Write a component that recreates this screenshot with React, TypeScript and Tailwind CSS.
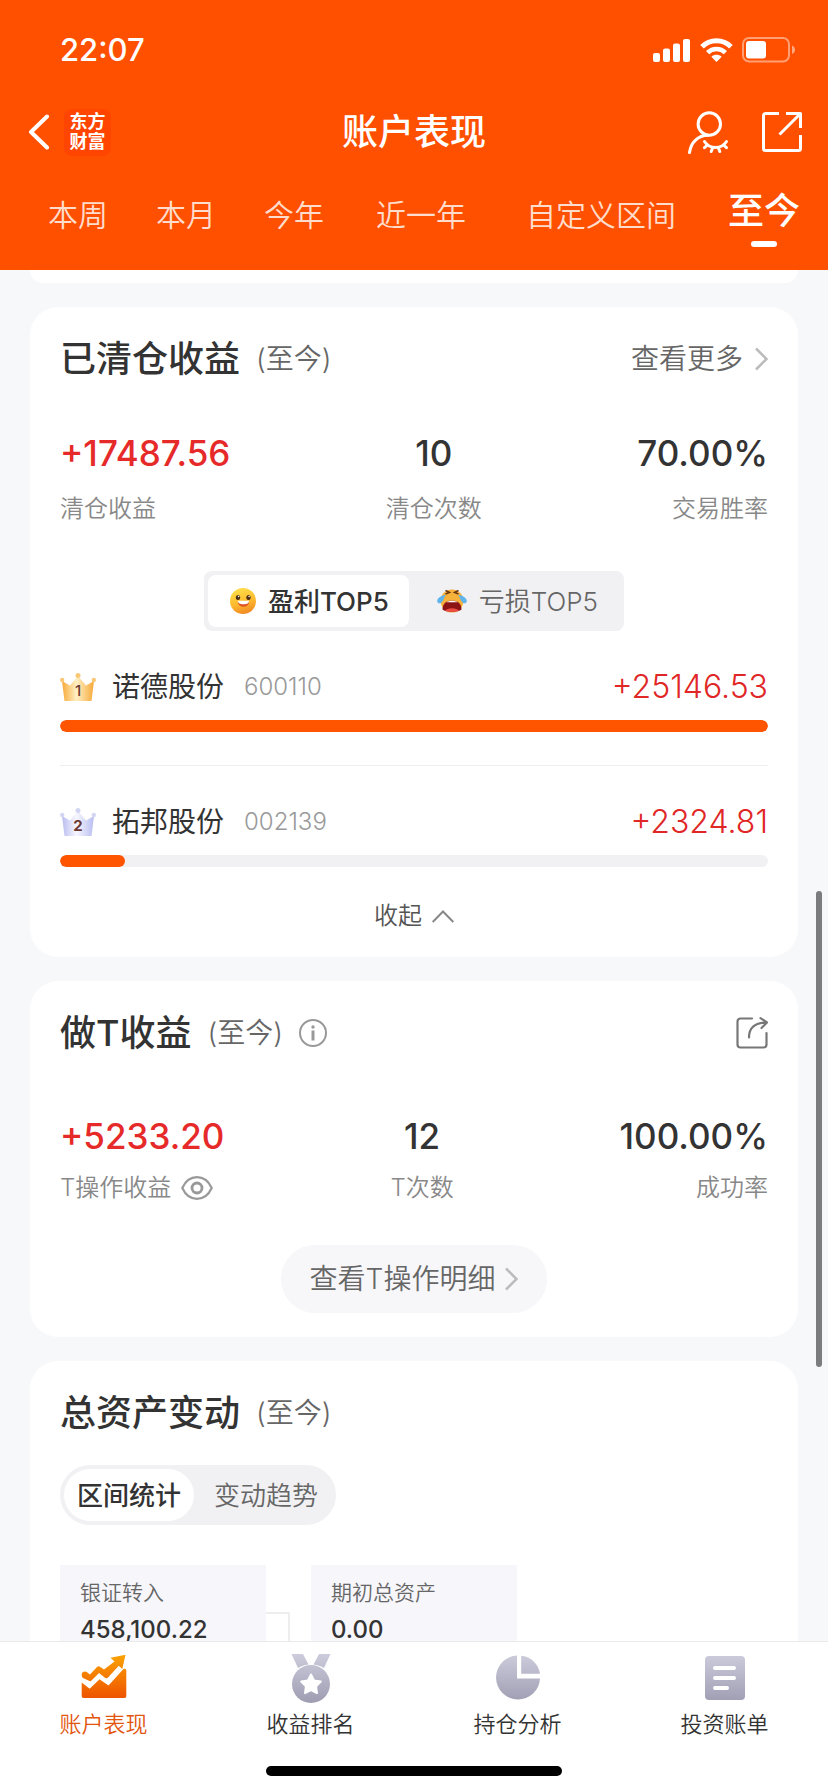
import { useState } from "react";
import type { ReactNode } from "react";
import clsx from "clsx";

const PERIODS = [
  { name: "本周", pad: "px-6" },
  { name: "本月", pad: "px-6" },
  { name: "今年", pad: "px-6" },
  { name: "近一年", pad: "px-7" },
  { name: "自定义区间", pad: "pl-8 pr-7" },
  { name: "至今", pad: "px-6" },
];

const TOP_PROFIT = [
  { rank: 1, name: "诺德股份", code: "600110", value: 25146.53 },
  { rank: 2, name: "拓邦股份", code: "002139", value: 2324.81 },
];

const StatusBar = () => (
  <div className="flex h-[98px] items-center justify-between pt-[2px] pr-8 pl-[60px]">
    <span className="text-[31px] leading-10 font-medium">22:07</span>
    <div className="flex items-center gap-[9px]">
      <svg width="38" height="24" viewBox="0 0 38 24" fill="currentColor">
        <rect x="0" y="15" width="7" height="9" rx="2" />
        <rect x="10" y="10.5" width="7" height="13.5" rx="2" />
        <rect x="20" y="5.5" width="7" height="18.5" rx="2" />
        <rect x="30" y="1" width="7" height="23" rx="2" />
      </svg>
      <svg width="33" height="24" viewBox="0 0 33 24" fill="none" stroke="currentColor">
        <path d="M2 8.8C10 .8 23 .8 31 8.8" strokeWidth="5" />
        <path d="M7.6 14.6c5-4.8 12.8-4.8 17.8 0" strokeWidth="4.6" />
        <path d="M16.5 24l-5.2-5.2c3-2.6 7.4-2.6 10.4 0z" fill="currentColor" stroke="none" />
      </svg>
      <svg width="54" height="26" viewBox="0 0 54 26">
        <rect x="1" y="1" width="46" height="23.5" rx="6" fill="none" stroke="#fff" strokeOpacity=".45" strokeWidth="2" />
        <rect x="4" y="4" width="20" height="17.5" rx="3" fill="#fff" />
        <path d="M50 8.5c4 1.5 4 7 0 8.5z" fill="#fff" fillOpacity=".5" />
      </svg>
    </div>
  </div>
);

const Header = () => {
  const [period, setPeriod] = useState("至今");
  return (
    <header className="h-[270px] shrink-0 bg-[#ff5000] text-white">
      <StatusBar />
      <div className="grid h-[68px] grid-cols-[1fr_auto_1fr] items-center px-[26px]">
        <div className="flex items-center gap-[14px]">
          <button aria-label="返回">
            <svg width="24" height="36" viewBox="-2 0 24 36" fill="none" stroke="currentColor" strokeWidth="4" strokeLinecap="round" strokeLinejoin="round">
              <path d="M19 2.5L3 18l16 15.5" />
            </svg>
          </button>
          <div className="flex size-[47px] items-center justify-center rounded-lg bg-[#ff4500] text-center text-[18px] leading-5 font-bold">
            东方
            <br />
            财富
          </div>
        </div>
        <h1 className="text-[36px] leading-10 font-medium">账户表现</h1>
        <div className="flex items-center justify-end gap-8">
          <button aria-label="隐藏账户">
            <svg width="43" height="43" viewBox="0 0 43 43" fill="none" stroke="currentColor" strokeWidth="3" strokeLinecap="round">
              <circle cx="22.3" cy="13" r="11.2" />
              <path d="M2.5 41.5C4 31 11 24.5 21 24.3" />
              <path d="M17.5 30.5c5 8 17 8 22 0" />
              <path d="M20.5 34l-3 2.7M25.7 36.8l-1.5 3.7M31.3 36.8l1.5 3.7M36.5 34l3 2.7" />
            </svg>
          </button>
          <button aria-label="分享">
            <svg width="40" height="40" viewBox="0 0 40 40" fill="none" stroke="currentColor" strokeWidth="3" strokeLinejoin="round">
              <path d="M17 1.5H3.5a2 2 0 0 0-2 2v33a2 2 0 0 0 2 2h33a2 2 0 0 0 2-2V23" />
              <path d="M24 1.5h14.5V16M38 2L17.5 22.5" />
            </svg>
          </button>
        </div>
      </div>
      <nav className="flex h-[98px] items-center overflow-hidden pl-6">
        {PERIODS.map((p) => {
          const active = p.name === period;
          return (
            <button
              key={p.name}
              onClick={() => setPeriod(p.name)}
              className={clsx("relative shrink-0 whitespace-nowrap", p.pad)}
            >
              <span
                className={clsx(
                  "block leading-10",
                  active ? "pb-2 text-[36px] font-medium" : "text-[30px] font-[350] text-[#ffdccc]"
                )}
              >
                {p.name}
              </span>
              {active && <span className="absolute -bottom-2 left-1/2 h-[6px] w-[26px] -translate-x-1/2 rounded-full bg-white" />}
            </button>
          );
        })}
      </nav>
    </header>
  );
};

const Chevron = ({ className }: { className?: string }) => (
  <svg className={className} width="13" height="24" viewBox="0 0 13 24" fill="none" stroke="currentColor" strokeWidth="2.5">
    <path d="M1 1.5L11.5 12 1 22.5" />
  </svg>
);

const Card = ({ children }: { children: ReactNode }) => (
  <section className="rounded-[28px] bg-white px-[30px] pt-8">{children}</section>
);

const CardTitle = ({ title, icon, action }: { title: string; icon?: ReactNode; action?: ReactNode }) => (
  <div className="flex h-10 items-center">
    <h2 className="text-[36px] leading-10 font-medium">{title}</h2>
    <span className="ml-4 text-[28px] leading-10 font-[350] text-[#666]">(至今)</span>
    {icon}
    <div className="ml-auto flex items-center">{action}</div>
  </div>
);

interface StatProps {
  value: string;
  label: string;
  align: string;
  red?: boolean;
  icon?: ReactNode;
}

const Stat = ({ value, label, align, red, icon }: StatProps) => (
  <div className={clsx("flex flex-col", align)}>
    <span className={clsx("text-[35px] leading-10 font-medium", red && "text-[#e62a2a]")}>{value}</span>
    <span className="flex items-center gap-[10px] text-[24px] leading-10 font-[350] text-[#888]">
      {label}
      {icon}
    </span>
  </div>
);

const HappyFace = () => (
  <svg width="26" height="26" viewBox="0 0 26 26">
    <defs>
      <linearGradient id="happy" x1="0.2" y1="0" x2="0.5" y2="1">
        <stop offset="0" stopColor="#ffe14d" />
        <stop offset="0.6" stopColor="#fdb92e" />
        <stop offset="1" stopColor="#f08a24" />
      </linearGradient>
    </defs>
    <circle cx="13" cy="13" r="13" fill="url(#happy)" />
    <ellipse cx="8" cy="9.5" rx="2.2" ry="2.5" fill="#4a2a10" />
    <ellipse cx="18.5" cy="9.5" rx="2.2" ry="2.5" fill="#4a2a10" />
    <circle cx="8.6" cy="8.5" r=".8" fill="#fff" />
    <circle cx="19.1" cy="8.5" r=".8" fill="#fff" />
    <path d="M8 13.3h11c0 4.2-2.5 5.500-5.500 5.500S8 17.500 8 13.300z" fill="#e2562b" />
    <path d="M7.800 12.800h11.400c-.3 2.400-2 3.500-5.700 3.500s-5.400-1.100-5.700-3.500z" fill="#fff" />
  </svg>
);

const CryingFace = () => (
  <svg width="30" height="26" viewBox="0 0 30 26">
    <circle cx="15" cy="13" r="11.5" fill="#f7b23c" />
    <path d="M8.500 2.500l4 2-4 1.500M21.500 2.500l-4 2 4 1.500" fill="none" stroke="#6b3a14" strokeWidth="1.500" />
    <path d="M8.500 7c-3 0-8 2.500-8.300 5.500C0 16 4 16.500 6 12.500zM21.500 7c3 0 8 2.500 8.300 5.500.2 3.500-3.800 4-5.800 0z" fill="#5fb4ec" />
    <path d="M5.500 21.500c0-6 4-9 9.500-9s9.500 3 9.500 9c-3 3-16 3-19 0z" fill="#8c1414" />
    <path d="M9.500 14.300c2.500-2 8.500-2 11 0z" fill="#fff" />
    <path d="M8 22.800c2-3.500 12-3.500 14 0-3 1.300-11 1.300-14 0z" fill="#ee4d43" />
  </svg>
);

const Crown = ({ rank }: { rank: number }) => {
  const gold = rank === 1;
  const id = `crown-${rank}`;
  const edge = gold ? "#f7a93a" : "#b9bdf0";
  const ball = gold ? "#f9c877" : "#d3d6f2";
  return (
    <svg width="36" height="28" viewBox="0 0 36 28">
      <defs>
        <linearGradient id={id}>
          <stop offset="0" stopColor={edge} />
          <stop offset="0.45" stopColor={gold ? "#fff0c4" : "#f6f7ff"} />
          <stop offset="1" stopColor={edge} />
        </linearGradient>
      </defs>
      <path d="M2 8l8 4.500L18 3l8 9.500L34 8l-2.500 20h-27z" fill={`url(#${id})`} />
      <circle cx="2.200" cy="7" r="2.200" fill={ball} />
      <circle cx="18" cy="2.500" r="2.500" fill={ball} />
      <circle cx="33.800" cy="7" r="2.200" fill={ball} />
      <text x="18" y="23" textAnchor="middle" fontSize="15" fontWeight={gold ? 500 : 700} fill="#6b3a35">
        {rank}
      </text>
    </svg>
  );
};

const ClearedCard = () => {
  const [tab, setTab] = useState("profit");
  const max = TOP_PROFIT[0].value;
  return (
    <Card>
      <CardTitle
        title="已清仓收益"
        action={
          <a href="#more" className="flex items-center gap-3 text-[28px] leading-10 font-[350] text-[#666]">
            查看更多
            <Chevron className="text-[#bbb]" />
          </a>
        }
      />
      <div className="mt-[54px] flex justify-between *:gap-4">
        <Stat value="+17487.56" label="清仓收益" align="items-start" red />
        <Stat value="10" label="清仓次数" align="items-center" />
        <Stat value="70.00%" label="交易胜率" align="items-end" />
      </div>
      <div className="mx-auto mt-[42px] flex h-[60px] w-fit rounded-lg bg-[#f1f1f3] p-1 text-[26px]">
        <button
          onClick={() => setTab("profit")}
          className={clsx("flex items-center gap-3 rounded-lg pr-5 pl-[22px]", tab === "profit" ? "bg-white font-medium" : "font-[350] text-[#666]")}
        >
          <HappyFace />
          盈利TOP5
        </button>
        <button
          onClick={() => setTab("loss")}
          className={clsx("flex items-center gap-3 rounded-lg pr-[22px] pl-7", tab === "loss" ? "bg-white font-medium" : "font-[350] text-[#666]")}
        >
          <CryingFace />
          亏损TOP5
        </button>
      </div>
      <ul className="mt-9 divide-y divide-[#eee]">
        {TOP_PROFIT.map((s) => (
          <li key={s.code} className="pb-[33px] not-first:pt-9">
            <div className="flex h-10 items-center">
              <Crown rank={s.rank} />
              <span className="ml-4 text-[28px] leading-10">{s.name}</span>
              <span className="ml-5 text-[24px] leading-10 font-[350] text-[#999]">{s.code}</span>
              <span className="ml-auto text-[32px] leading-10 font-[350] text-[#e02626]">+{s.value.toFixed(2)}</span>
            </div>
            <div className="mt-[13px] h-3 overflow-hidden rounded-full bg-[#f1f1f3]">
              <div className="h-full rounded-full bg-[#ff5500]" style={{ width: `${(s.value / max) * 100}%` }} />
            </div>
          </li>
        ))}
      </ul>
      <button className="mx-auto -mt-1 flex items-center gap-[10px] pb-[21px] text-[24px] leading-10 font-[350] text-[#555]">
        收起
        <svg width="22" height="13" viewBox="0 0 22 13" fill="none" stroke="#888" strokeWidth="2">
          <path d="M.7 12L11 1.500 21.300 12" />
        </svg>
      </button>
    </Card>
  );
};

const TradeCard = () => (
  <Card>
    <CardTitle
      title="做T收益"
      icon={
        <svg className="ml-4" width="28" height="28" viewBox="0 0 28 28" fill="none" stroke="#999" strokeWidth="2">
          <circle cx="14" cy="14" r="13" />
          <path d="M14 11.500v10" strokeWidth="3" />
          <circle cx="14" cy="8" r="1.700" fill="#999" stroke="none" />
        </svg>
      }
      action={
        <button aria-label="分享做T收益">
          <svg width="32" height="32" viewBox="0 0 32 32" fill="none" stroke="#777" strokeWidth="2.200" strokeLinecap="round" strokeLinejoin="round">
            <path d="M16 1.500H4.500a3 3 0 0 0-3 3v23a3 3 0 0 0 3 3h23a3 3 0 0 0 3-3V16" />
            <path d="M13 20.500C13 11 19 5.500 30.500 5.500M24.500 1.200l6.500 4.300-5.500 5.500" />
          </svg>
        </button>
      }
    />
    <div className="mt-[63px] flex justify-between *:gap-3">
      <Stat
        value="+5233.20"
        label="T操作收益"
        align="items-start"
        red
        icon={
          <svg width="32" height="24" viewBox="0 0 32 24" fill="none" stroke="#999" strokeWidth="2.200">
            <path d="M1.300 12C4.500 5 10 1.200 16 1.200S27.500 5 30.700 12C27.500 19 22 22.800 16 22.800S4.500 19 1.300 12z" />
            <circle cx="16" cy="12" r="5" strokeWidth="2.800" />
          </svg>
        }
      />
      <Stat value="12" label="T次数" align="items-center" />
      <Stat value="100.00%" label="成功率" align="items-end" />
    </div>
    <div className="flex justify-center pt-[37px] pb-6">
      <button className="flex h-[68px] items-center gap-[10px] rounded-full bg-[#f7f7fa] px-[29px] text-[28px] font-[350] text-[#666]">
        查看T操作明细
        <Chevron className="text-[#bbb]" />
      </button>
    </div>
  </Card>
);

const AssetBox = ({ label, value }: { label: string; value: string }) => (
  <div className="h-[170px] w-[206px] bg-[#f6f6fb] px-5 pt-3">
    <div className="text-[21px] leading-8 font-[350] text-[#666]">{label}</div>
    <div className="mt-[5px] text-[24px] leading-8 font-medium">{value}</div>
  </div>
);

const AssetCard = () => {
  const [view, setView] = useState("区间统计");
  return (
    <Card>
      <CardTitle title="总资产变动" />
      <div className="mt-8 flex h-[60px] w-fit rounded-full bg-[#f1f1f3] p-1 text-[26px]">
        {["区间统计", "变动趋势"].map((name) => (
          <button
            key={name}
            onClick={() => setView(name)}
            className={clsx("rounded-full", name === view ? "bg-white px-[13px] font-medium" : "pr-[14px] pl-5 font-[350] text-[#666]")}
          >
            {name}
          </button>
        ))}
      </div>
      <div className="mt-10 flex">
        <AssetBox label="银证转入" value="458,100.22" />
        <div className="mt-[47px] mr-[21px] w-6 border-t-2 border-r-2 border-[#eee]" />
        <AssetBox label="期初总资产" value="0.00" />
      </div>
    </Card>
  );
};

const NAV_ITEMS = [
  {
    name: "账户表现",
    icon: (
      <svg width="46" height="50" viewBox="0 0 46 50">
        <g fill="url(#nav-on)">
          <path d="M.7 20.500c0-2.500 3-4 5-2.500l3.300 2.500 7-7.500c.8-.9 2-.9 3-.2l4 2.700L33.500 7.500 29.500 3.800 44.500.8 41.300 15 37.800 11.800 27 23.500c-.9 1-2 1-3 .3L18 19l-7.500 7.500c-.8.8-1.700.8-2.500.2L2 24c-.8-.5-1.300-2-1.300-3.500z" />
          <path d="M.7 28.500l8 6.300 9.800-9.600 9 6.300L42 15.500c1.200-1.300 3.300-.9 3.300.8V42c0 1.300-.8 2-2 2H2.700c-1.200 0-2-.7-2-2z" />
        </g>
      </svg>
    ),
  },
  {
    name: "收益排名",
    icon: (
      <svg width="40" height="50" viewBox="0 0 40 50">
        <path d="M.5 0H12l5.500 10.500c-4 .4-7.500 1.500-10.500 3.500zM39.500 0H28l-5.500 10.500c4 .4 7.500 1.500 10.500 3.500z" fill="url(#nav-off)" />
        <circle cx="20" cy="30" r="19" fill="url(#nav-off)" />
        <path d="M20 20.500l3.100 6 6.700 1.100-4.700 4.800.9 6.700-6-2.900-6 2.900.9-6.700-4.700-4.800 6.700-1.100z" fill="#fff" stroke="#fff" strokeWidth="2" strokeLinejoin="round" />
      </svg>
    ),
  },
  {
    name: "持仓分析",
    icon: (
      <svg width="46" height="50" viewBox="0 0 46 50" fill="url(#nav-off)">
        <path d="M22 1.500A22 22 0 1 0 45 24.500H22z" />
        <path d="M26.200 1.700A21 21 0 0 1 45 19.800H26.200z" />
      </svg>
    ),
  },
  {
    name: "投资账单",
    icon: (
      <svg width="40" height="50" viewBox="0 0 40 50">
        <rect y="2" width="40" height="44" rx="4" fill="url(#nav-off)" />
        <path d="M10 14h19M10 24h19M10 34h12" stroke="#fff" strokeWidth="4" strokeLinecap="round" />
      </svg>
    ),
  },
];

const BottomNav = () => (
  <footer className="shrink-0 border-t border-[#eaeaea] bg-white">
    {/* shared icon gradients */}
    <svg width="0" height="0" className="absolute">
      <defs>
        <linearGradient id="nav-on" x1="0" y1="0" x2="0" y2="46" gradientUnits="userSpaceOnUse">
          <stop offset="0" stopColor="#fba400" />
          <stop offset="1" stopColor="#ee5000" />
        </linearGradient>
        <linearGradient id="nav-off" x1="0" y1="0" x2="0" y2="48" gradientUnits="userSpaceOnUse">
          <stop offset="0" stopColor="#cdccdc" />
          <stop offset="1" stopColor="#9f9db2" />
        </linearGradient>
      </defs>
    </svg>
    <nav className="grid grid-cols-4 pt-3">
      {NAV_ITEMS.map((item, i) => (
        <a
          key={item.name}
          href="#nav"
          className={clsx("flex flex-col items-center text-[22px] leading-8 font-[350]", i === 0 ? "text-[#e2560f]" : "text-[#333]")}
        >
          {item.icon}
          <span className="mt-1">{item.name}</span>
        </a>
      ))}
    </nav>
    <div className="mx-auto mt-[26px] mb-4 h-[10px] w-[296px] rounded-full bg-black" />
  </footer>
);

export default function App() {
  return (
    <div className="flex h-screen flex-col bg-[#f7f8fa] font-['Inter','Noto_Sans_CJK_SC',sans-serif] text-[#333]">
      <Header />
      <main className="relative min-h-0 flex-1 overflow-hidden px-[30px]">
        <div className="h-[13px] rounded-b-[28px] bg-white" />
        <div className="mt-6 flex flex-col gap-6">
          <ClearedCard />
          <TradeCard />
          <AssetCard />
        </div>
        <div className="absolute top-[621px] right-[6px] h-[476px] w-[6px] rounded-full bg-[#7b7c7e]" />
      </main>
      <BottomNav />
    </div>
  );
}
